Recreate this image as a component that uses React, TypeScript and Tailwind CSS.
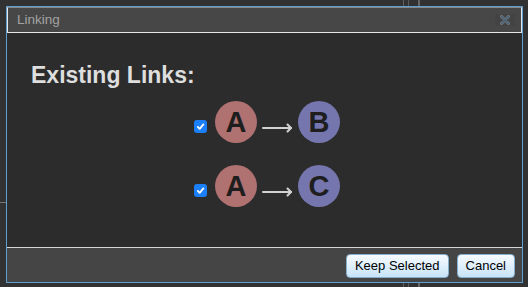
import React from "react";

interface Link {
  from: string;
  to: string;
  checked: boolean;
}

const links: Link[] = [
  { from: "A", to: "B", checked: true },
  { from: "A", to: "C", checked: true },
];

const Node = ({ label, color }: { label: string; color: string }) => (
  <div
    className={`w-[42px] h-[42px] rounded-full flex items-center justify-center text-[29px] font-bold leading-none text-[#1e1e1e] ${color}`}
  >
    {label}
  </div>
);

const Check = ({ checked }: { checked: boolean }) => (
  <div className="mt-[19px] w-[13px] h-[13px] rounded-[3px] bg-[#1a7ff8] flex items-center justify-center">
    {checked && (
      <svg width="9" height="9" viewBox="0 0 10 10" fill="none" stroke="white" strokeWidth="2" strokeLinecap="round" strokeLinejoin="round">
        <path d="M2 5.4l2.1 2.2L8.2 2.6" />
      </svg>
    )}
  </div>
);

const Arrow = () => (
  <svg className="mt-[22px]" width="31" height="10" viewBox="0 0 31 10" fill="none" stroke="#d2d2d2" strokeWidth="2" strokeLinecap="round" strokeLinejoin="round">
    <path d="M1 5h28" />
    <path d="M25.5 1.5L29 5l-3.5 3.5" />
  </svg>
);

export default function App() {
  return (
    <div className="relative w-[528px] h-[287px] bg-[#323232] pt-[6px] pl-[6px] font-['Liberation_Sans',Arial,sans-serif] overflow-hidden">
      {/* canvas lines behind the dialog */}
      <div className="absolute left-0 top-[202px] w-[6px] h-px bg-[#777]" />
      <div className="absolute left-[403px] top-0 w-px h-full bg-[#5e5e5e]" />
      <div className="absolute left-[408px] top-0 w-px h-full bg-[#5a5a5a]" />
      <div className="absolute left-[418px] top-0 w-[2px] h-full bg-[#666]" />

      <div className="relative w-[517px] h-[277px] border border-[#5f9fcf] bg-[#2c2c2c] flex flex-col">
        {/* Title bar */}
        <div className="h-[26px] border border-[#e6e6e6] border-t-[#8a8a8a] bg-[#474747] flex items-center justify-between pl-[9px] pr-[6px]">
          <span className="text-[13.5px] text-[#a3a3a3]">Linking</span>
          <div className="w-[20px] h-[12px] bg-[#434343] flex items-center justify-center">
            <svg width="10" height="10" viewBox="0 0 10 10" fill="none" strokeLinecap="round">
              <path d="M1.5 1.5l7 7M8.5 1.5l-7 7" stroke="#6f7c88" strokeWidth="3" />
              <path d="M1.5 1.5l7 7M8.5 1.5l-7 7" stroke="#4d6174" strokeWidth="1.6" />
            </svg>
          </div>
        </div>

        {/* Body */}
        <div className="flex-1 pt-[31px]">
          <h2 className="pl-[24px] text-[23px] font-bold leading-none text-[#dedede]">Existing Links:</h2>
          <div className="mt-[14px] flex flex-col gap-[22px] pl-[5px]">
            {links.map((link, i) => (
              <div key={i} className="flex items-start justify-center">
                <Check checked={link.checked} />
                <div className="ml-[8px]">
                  <Node label={link.from} color="bg-[#b07171]" />
                </div>
                <div className="mx-[5px]">
                  <Arrow />
                </div>
                <Node label={link.to} color="bg-[#7576ae]" />
              </div>
            ))}
          </div>
        </div>

        {/* Footer */}
        <div className="h-[35px] border-t border-[#d4d4d4] bg-[#454545] flex items-center justify-end gap-[8px] pr-[7px] pt-px">
          <button className="h-[24px] px-[8px] rounded-[4px] border border-[#86aecd] bg-gradient-to-b from-[#f7fbff] to-[#c7e4f8] text-[13px] text-black leading-none">
            Keep Selected
          </button>
          <button className="h-[24px] px-[8px] rounded-[4px] border border-[#86aecd] bg-gradient-to-b from-[#f7fbff] to-[#c7e4f8] text-[13px] text-black leading-none">
            Cancel
          </button>
        </div>
      </div>
    </div>
  );
}
